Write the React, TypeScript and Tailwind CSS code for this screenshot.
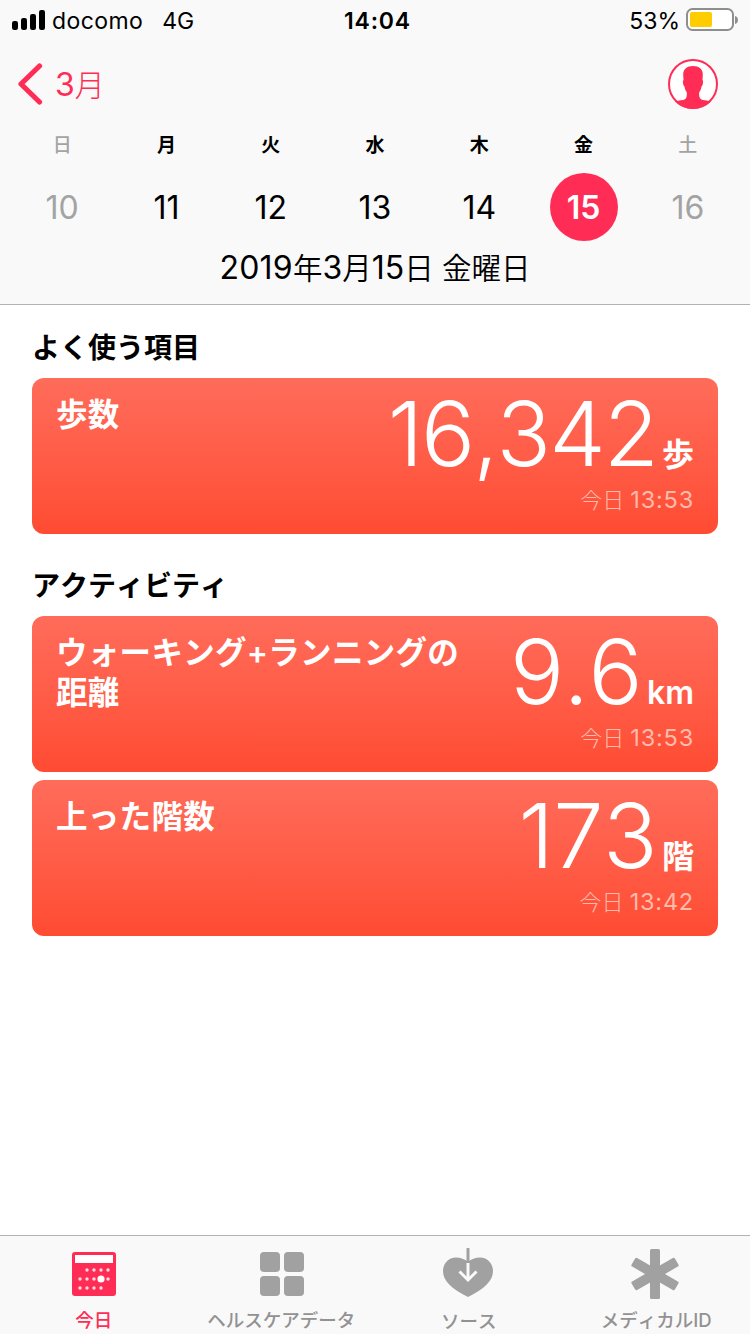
import type { ReactNode } from 'react';
import clsx from 'clsx';

interface Day {
  label: string;
  date: number;
  weekend?: boolean;
  selected?: boolean;
}

const days: Day[] = [
  { label: '日', date: 10, weekend: true },
  { label: '月', date: 11 },
  { label: '火', date: 12 },
  { label: '水', date: 13 },
  { label: '木', date: 14 },
  { label: '金', date: 15, selected: true },
  { label: '土', date: 16, weekend: true },
];

function StatusBar() {
  return (
    <div className="grid h-10 grid-cols-3 items-center pl-3 pr-[11px] text-[23px] leading-[38px] text-black">
      <div className="flex items-center whitespace-nowrap">
        <svg width="33" height="20" viewBox="0 0 33 20" className="mr-[7px]">
          <rect x="0" y="11" width="6" height="9" rx="2.2" />
          <rect x="9" y="8" width="6" height="12" rx="2.2" />
          <rect x="18" y="4" width="6" height="16" rx="2.2" />
          <rect x="27" y="0" width="6" height="20" rx="2.2" />
        </svg>
        <span className="pt-0.5 tracking-[0.4px]">docomo</span>
        <span className="ml-[19px] pt-0.5">4G</span>
      </div>
      <div className="pt-0.5 pl-1 text-center font-semibold tracking-[0.8px]">14:04</div>
      <div className="flex items-center justify-end">
        <span className="mr-[6px] pt-0.5">53%</span>
        <svg width="53" height="24" viewBox="0 0 53 24">
          <rect x="1" y="1" width="46" height="21" rx="5.5" fill="#fff" stroke="#8e8e8e" strokeWidth="2" />
          <rect x="4" y="4" width="22" height="15" rx="2" fill="#ffcc00" />
          <path d="M49 8c4 1 4 7 0 8z" fill="#8e8e8e" />
        </svg>
      </div>
    </div>
  );
}

function NavBar() {
  return (
    <div className="flex h-[88px] items-center justify-between pl-[17px] pr-8 text-[#ff2d55]">
      <div className="flex items-center">
        <svg width="26" height="42" viewBox="0 0 26 42" fill="none" stroke="currentColor" strokeWidth="5.2" strokeLinecap="round" strokeLinejoin="round">
          <path d="M22.5 3 4 21l18.500 18" />
        </svg>
        <span className="ml-3 pt-0.5 text-[30px] leading-none font-light">
          <span className="text-[32px] font-[370]">3</span>月
        </span>
      </div>
      <svg width="50" height="50" viewBox="0 0 50 50">
        <circle cx="25" cy="25" r="24" fill="#fff" stroke="currentColor" strokeWidth="2" />
        <path
          d="M25 7c-6 0-9.800 3-9.800 8.500L15.500 21c-1 .5-.6 5.500 1 6.500.5 3 1.200 4.500 2.400 6 0 3.500-.3 5.800-1.900 6.800-2 1.200-5.500 1-10 2C11.500 47 18 50 25 50s13.500-3 18-7.700c-4.500-1-8-.8-10-2-1.600-1-1.900-3.300-1.900-6.800 1.200-1.500 1.900-3 2.400-6 1.600-1 2-6 1-6.500l.3-5.500C34.800 10 31 7 25 7z"
          fill="currentColor"
        />
      </svg>
    </div>
  );
}

function WeekStrip() {
  return (
    <div className="grid grid-cols-7 px-[10px]">
      {days.map((day) => (
        <div key={day.date} className={clsx('flex flex-col items-center', day.weekend ? 'text-[#a3a3a3]' : 'text-black')}>
          <span className={clsx('h-9 text-[19px] leading-9', day.weekend ? 'font-medium' : 'font-bold')}>{day.label}</span>
          <span
            className={clsx(
              'mt-[9px] size-[68px] rounded-full text-center text-[32px] leading-[69px]',
              day.selected && 'bg-[#ff2d55] font-semibold text-white',
            )}
          >
            {day.date}
          </span>
        </div>
      ))}
    </div>
  );
}

interface CardProps {
  title: string;
  value: string;
  unit: string;
  time: string;
}

function MetricCard({ title, value, unit, time }: CardProps) {
  return (
    <div className="flex h-[156px] justify-between rounded-xl bg-linear-to-b from-[#ff6c5a] to-[#ff4b32] px-6 text-white">
      <h3 className="mt-[17px] w-[420px] text-[31.5px] leading-10 font-semibold tracking-[0.3px] [font-kerning:none]">{title}</h3>
      <div className="flex flex-col items-end whitespace-nowrap">
        <div className="flex h-[104px] items-baseline leading-[112px]">
          <span
            className={clsx(
              "text-[90px] font-[270] [font-kerning:none] [font-variation-settings:'opsz'_14]",
              value.length > 4 ? 'tracking-[-2px]' : 'tracking-[-0.6px]',
            )}
          >
            {value}
          </span>
          <span className="ml-[5px] text-[32px] font-semibold">{unit}</span>
        </div>
        <div className="text-[22px] leading-9 font-light text-[#ffbcac]">
          今日 <span className="text-[23.5px] font-[390] tracking-[0.8px]">{time}</span>
        </div>
      </div>
    </div>
  );
}

function Tab({ label, active, children }: { label: string; active?: boolean; children: ReactNode }) {
  return (
    <div className={clsx('flex flex-1 flex-col items-center', active ? 'text-[#ff2d55]' : 'text-[#929292]')}>
      <div className="mt-3 flex h-[52px] items-center">{children}</div>
      <span className="mt-[7px] text-[18.5px] leading-7 font-medium whitespace-nowrap [font-kerning:none]">{label}</span>
    </div>
  );
}

const dots = [
  [15, 18], [22, 18], [29, 18], [36, 18],
  [8, 27], [15, 27], [22, 27], [36, 27],
  [8, 36], [15, 36], [22, 36], [29, 36],
];

function TabBar() {
  return (
    <nav className="flex h-[99px] border-t border-[#b2b2b2] bg-[#f9f9f9]">
      <Tab label="今日" active>
        <svg width="44" height="44" viewBox="0 0 44 44">
          <rect width="44" height="44" rx="3" fill="currentColor" />
          <rect x="3" y="3" width="38" height="8" fill="#fff" />
          {dots.map(([x, y]) => (
            <circle key={`${x}-${y}`} cx={x} cy={y} r="1.7" fill="#ffd9e0" />
          ))}
          <circle cx="29" cy="27" r="3.6" fill="#fff" />
        </svg>
      </Tab>
      <Tab label="ヘルスケアデータ">
        <div className="ml-px grid grid-cols-2 gap-1">
          {[0, 1, 2, 3].map((i) => (
            <div key={i} className="size-5 rounded bg-[#a1a1a1]" />
          ))}
        </div>
      </Tab>
      <Tab label="ソース">
        <svg width="50" height="52" viewBox="0 0 50 52" fill="none" strokeWidth="3" className="mr-px">
          <path d="M25 14C22 11 17.500 9.500 13 9.500 5.500 9.500 0 15.500 0 23c0 10 9 18 25 26 16-8 25-16 25-26 0-7.500-5.500-13.500-13-13.500-4.500 0-9 1.500-12 4.500z" fill="#a1a1a1" />
          <path d="M25 1v14" stroke="#a1a1a1" strokeLinecap="round" />
          <path d="M25 15v17M16.500 23.500l8.500 8.500 8.500-8.500" stroke="#f9f9f9" />
        </svg>
      </Tab>
      <Tab label="メディカルID">
        <svg width="50" height="50" viewBox="0 0 50 50" fill="#a1a1a1" className="mr-0.5">
          <rect x="20" width="10" height="50" rx="1.500" />
          <rect x="20" width="10" height="50" rx="1.500" transform="rotate(60 25 25)" />
          <rect x="20" width="10" height="50" rx="1.500" transform="rotate(-60 25 25)" />
        </svg>
      </Tab>
    </nav>
  );
}

export default function App() {
  return (
    <div className="flex h-[1334px] w-[750px] flex-col overflow-hidden bg-white font-[Inter,'Noto_Sans_CJK_JP',sans-serif]">
      <header className="h-[305px] border-b border-[#b2b2b2] bg-[#f9f9f9]">
        <StatusBar />
        <NavBar />
        <WeekStrip />
        <p className="mt-1 text-center text-[29.5px] leading-[45px] font-[350] text-black">
          <span className="text-[32px] font-[390] tracking-[0.2px]">2019</span>年
          <span className="text-[32px] font-[390]">3</span>月
          <span className="text-[32px] font-[390]">15</span>日 金曜日
        </p>
      </header>
      <main className="flex-1 px-8">
        <h2 className="h-[73px] pt-[23px] text-[28px] leading-10 font-bold text-black [font-kerning:none]">よく使う項目</h2>
        <MetricCard title="歩数" value="16,342" unit="歩" time="13:53" />
        <h2 className="h-[82px] pt-8 text-[28px] leading-10 font-bold text-black [font-kerning:none]">アクティビティ</h2>
        <div className="flex flex-col gap-2">
          <MetricCard title="ウォーキング+ランニングの距離" value="9.6" unit="km" time="13:53" />
          <MetricCard title="上った階数" value="173" unit="階" time="13:42" />
        </div>
      </main>
      <TabBar />
    </div>
  );
}
